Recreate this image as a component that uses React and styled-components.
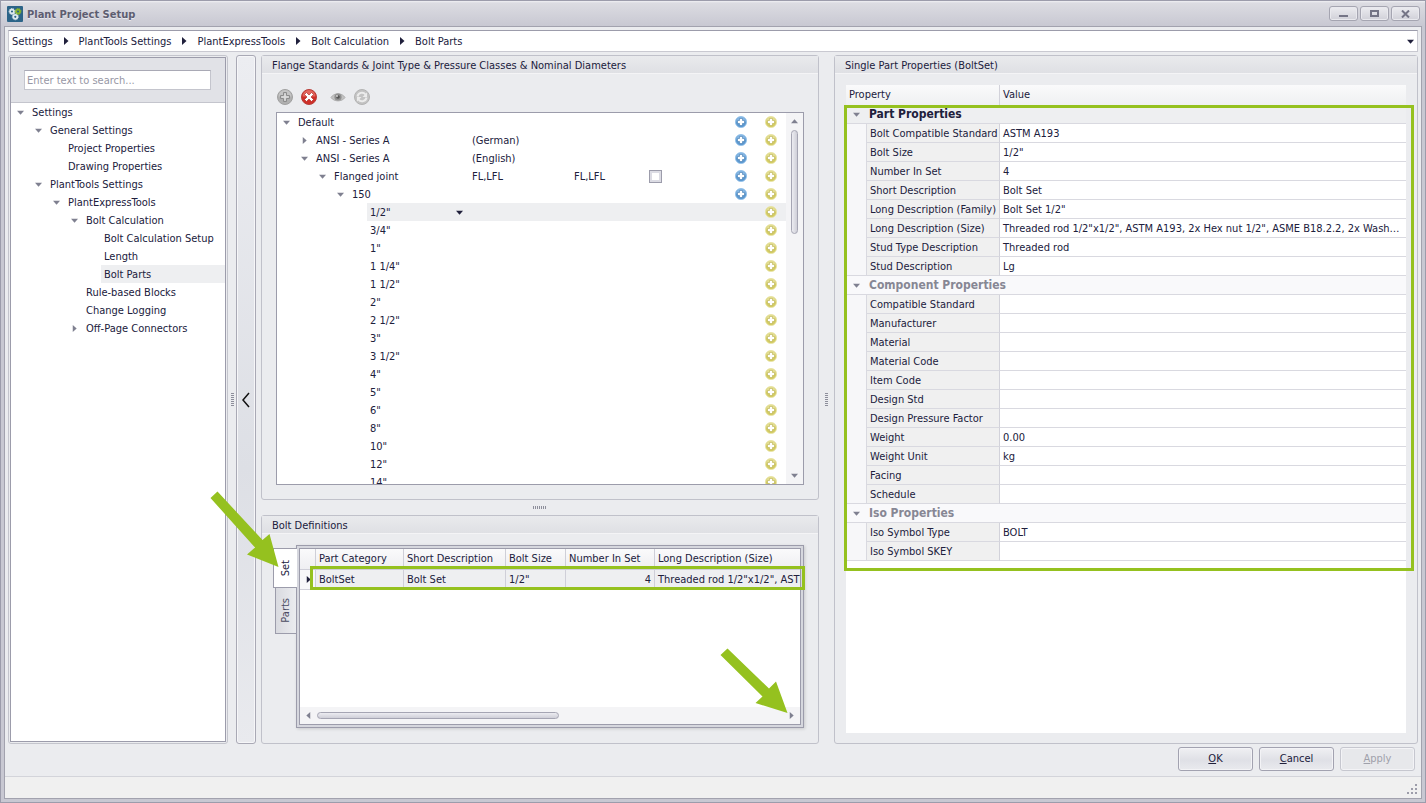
import React, { useState } from 'react';
import styled, { createGlobalStyle, css } from 'styled-components';

const GlobalStyle = createGlobalStyle`
  * {
    box-sizing: border-box;
  }

  body {
    margin: 0;
    color: #20203c;
    font-family: 'DejaVu Sans Condensed', 'DejaVu Sans', Tahoma, sans-serif;
    font-size: 11px;
    line-height: 18px;
  }

  button,
  input {
    font: inherit;
    color: inherit;
  }
`;

const GREEN = '#95c11f';

// Window frame
const Window = styled.div`
  display: flex;
  flex-direction: column;
  height: 100vh;
  min-height: 600px;
  padding: 0 3px 3px;
  border: 1px solid #9c9cab;
  background: #c8c8d2;
`;

const TitleBar = styled.header`
  display: flex;
  align-items: center;
  flex: none;
  height: 25px;
  margin: 0 -3px;
  padding: 0 5px 0 6px;
  background: linear-gradient(#f0f0f3 0, #dcdce2 2px, #c8c8d2 100%);
`;

const Title = styled.h1`
  flex: 1;
  height: 18px;
  margin: 0 0 0 4px;
  color: #5d5d70;
  font-size: 11px;
  font-weight: bold;
  line-height: 20px;
  text-shadow: 0 1px 0 #e8e8ee;
`;

const CaptionButtons = styled.div`
  display: flex;
  gap: 2px;
`;

const CaptionButton = styled.button`
  display: flex;
  align-items: center;
  justify-content: center;
  width: 29px;
  height: 15px;
  padding: 0;
  border: 1px solid #a5a5b1;
  border-radius: 3px;
  background: linear-gradient(#ececf0, #d0d0d8);
  box-shadow: inset 0 0 0 1px #e9e9ee;
`;

const Client = styled.div`
  display: flex;
  flex-direction: column;
  flex: 1;
  min-height: 0;
  border: 1px solid #a2a2ae;
  background: #ebecef;
`;

const Breadcrumb = styled.nav`
  display: flex;
  align-items: center;
  flex: none;
  gap: 9px;
  height: 22px;
  margin: 3px 3px 0;
  padding: 0 3px;
  border: 1px solid #c9c9d1;
  border-top-color: #9c9cab;
  background: #fff;

  a {
    height: 18px;
    color: inherit;
    line-height: 20px;
    text-decoration: none;
  }
`;

const CrumbMenu = styled.button`
  display: flex;
  margin-left: auto;
  padding: 0;
  border: 0;
  background: none;
`;

const Main = styled.main`
  display: grid;
  grid-template-columns: 220px 8px 20px 5px minmax(0, 558fr) 15px minmax(0, 584fr);
  flex: 1;
  min-height: 0;
  padding: 3px 3px 0;
`;

// Navigation
const NavFrame = styled.aside`
  padding: 1px;
  border: 1px solid #c4c5cd;
  border-radius: 3px;
  min-height: 0;
`;

const NavInner = styled.div`
  display: flex;
  flex-direction: column;
  height: 100%;
  border: 1px solid #9c9cab;
  background: #fff;
`;

const SearchBar = styled.div`
  padding: 12px 14px 12px 13px;
  border-bottom: 1px solid #c4c5cd;
  background: #e1e2e7;
`;

const SearchInput = styled.input`
  display: block;
  width: 100%;
  height: 20px;
  padding: 0 2px;
  border: 1px solid #c4c5cd;
  border-top-color: #a9a9b5;
  border-radius: 0;
  background: #fff;

  &::placeholder {
    color: #9797a5;
    opacity: 1;
  }
`;

const NavTree = styled.ul`
  margin: 0;
  padding: 0;
  list-style: none;
`;

const NavItem = styled.li`
  display: flex;
  align-items: center;
  height: 18px;
  padding-left: ${({ $level }) => $level * 18}px;
`;

const NavLink = styled.a`
  flex: 1;
  height: 18px;
  padding-left: 3px;
  color: inherit;
  line-height: 20px;
  text-decoration: none;
  background: ${({ $active }) => ($active ? '#eeeff1' : 'none')};
`;

const Expander = styled.button`
  display: flex;
  align-items: center;
  justify-content: center;
  flex: none;
  width: 18px;
  height: 18px;
  padding: 0;
  border: 0;
  background: none;
`;

const VSplitter = styled.div`
  display: flex;
  align-items: center;
  justify-content: center;
`;

const HSplitter = styled.div`
  display: flex;
  align-items: center;
  justify-content: center;
  flex: none;
  height: 15px;
`;

const CollapsedBar = styled.button`
  display: flex;
  align-items: center;
  justify-content: center;
  padding: 0;
  border: 1px solid #a9a9b5;
  border-radius: 3px;
  background: linear-gradient(#ecedf1, #dddfe5 60%, #e9eaee);
  box-shadow: inset 0 0 0 1px #f6f6f8;
`;

// Group boxes
const Column = styled.div`
  display: flex;
  flex-direction: column;
  min-height: 0;
`;

const Group = styled.section`
  display: flex;
  flex-direction: column;
  flex: ${({ $height }) => ($height ? `0 0 ${$height}` : '1')};
  min-height: 0;
  border: 1px solid #c0c1ca;
  border-radius: 3px;
  background: #ebecef;
`;

const GroupTitle = styled.h2`
  flex: none;
  height: 18px;
  margin: 0;
  padding: 0 10px;
  border-bottom: 1px solid #f4f4f6;
  background: linear-gradient(#e9eaed, #dfe0e4);
  font-size: 11px;
  font-weight: normal;
  line-height: 20px;
`;

const GroupBody = styled.div`
  display: flex;
  flex-direction: column;
  flex: 1;
  min-height: 0;
  padding: ${({ $pad }) => $pad};
`;

const Toolbar = styled.div`
  display: flex;
  flex: none;
  gap: 8px;
  height: 16px;
  margin-bottom: 7px;
  padding-left: 1px;

  button:nth-child(3) {
    margin-left: 5px;
  }
`;

const IconButton = styled.button`
  display: flex;
  width: 16px;
  height: 16px;
  padding: 0;
  border: 0;
  background: none;
`;

const TreeBox = styled.div`
  display: flex;
  flex: 1;
  min-height: 0;
  border: 1px solid #9c9cab;
  background: #fff;
`;

const TreeRows = styled.div`
  flex: 1;
  min-width: 0;
  overflow: hidden;
`;

const TreeRow = styled.div`
  display: grid;
  grid-template-columns: minmax(0, 1fr) 102px 55px 60px 41px 30px 30px;
  align-items: center;
  height: 18px;
  ${({ $level, $active }) =>
    $active &&
    css`
      background: linear-gradient(#eeeff1, #eeeff1) right / calc(100% - ${$level * 18}px) no-repeat;
    `}
`;

const TreeName = styled.div`
  display: flex;
  align-items: center;
  padding-left: ${({ $level }) => $level * 18}px;

  span {
    flex: 1;
    height: 18px;
    padding-left: 3px;
    line-height: 20px;
  }
`;

const TreeText = styled.span`
  height: 18px;
  padding-left: 4px;
  line-height: 20px;
`;

const TreeCentre = styled.span`
  display: flex;
  justify-content: center;
`;

const Check = styled.input`
  appearance: none;
  width: 13px;
  height: 13px;
  margin: 0;
  border: 1px solid #9c9cab;
  background: #fff;
  box-shadow: inset 0 0 0 2px #dcdce4;
`;

const ScrollBar = styled.div`
  display: flex;
  flex: none;
  flex-direction: ${({ $horizontal }) => ($horizontal ? 'row' : 'column')};
  align-items: center;
  gap: 5px;
  width: ${({ $horizontal }) => ($horizontal ? 'auto' : '17px')};
  height: ${({ $horizontal }) => ($horizontal ? '17px' : 'auto')};
  padding: ${({ $horizontal }) => ($horizontal ? '0 5px' : '5px 0')};
  background: #f4f4f6;
`;

const Track = styled.div`
  display: flex;
  flex: 1;
  flex-direction: inherit;
`;

const Thumb = styled.div`
  border: 1px solid #a5a5b3;
  border-radius: 4px;
  width: ${({ $horizontal }) => ($horizontal ? '52%' : '7px')};
  height: ${({ $horizontal }) => ($horizontal ? '7px' : '31%')};
  background: linear-gradient(${({ $horizontal }) => ($horizontal ? '180deg' : '90deg')}, #ececf1, #cfcfd8);
`;

// Bolt definitions
const Tabbed = styled.div`
  position: relative;
  display: flex;
  flex: 1;
  min-height: 0;
`;

const TabStrip = styled.div`
  display: flex;
  flex: none;
  flex-direction: column;
  align-items: flex-end;
  width: 23px;
  padding-top: 3px;
`;

const Tab = styled.button`
  z-index: ${({ $active }) => ($active ? 1 : 0)};
  width: ${({ $active }) => ($active ? 24 : 21)}px;
  height: ${({ $active }) => ($active ? 40 : 46)}px;
  margin-right: ${({ $active }) => ($active ? -1 : 0)}px;
  padding: 0;
  border: 1px solid #9c9cab;
  border-right: 0;
  border-top-width: ${({ $active }) => ($active ? 1 : 0)}px;
  background: ${({ $active }) => ($active ? '#fff' : 'linear-gradient(90deg, #d9dae0, #ebecef)')};
  color: ${({ $active }) => ($active ? '#20203c' : '#4c4c63')};
  line-height: 20px;
  writing-mode: vertical-rl;

  span {
    display: inline-block;
    rotate: 180deg;
  }
`;

const TabPage = styled.div`
  flex: 1;
  min-width: 0;
  padding: 2px;
  border: 1px solid #9c9cab;
  background: #d6d7de;
  box-shadow: 1px 1px 3px rgba(0, 0, 0, 0.15);
`;

const GridFrame = styled.div`
  display: flex;
  flex-direction: column;
  height: 100%;
  border: 1px solid #9c9cab;
  background: #fff;
`;

const GridClip = styled.div`
  flex: 1;
  overflow: hidden;
`;

const BoltGrid = styled.table`
  width: 100%;
  border-collapse: separate;
  border-spacing: 0;
  table-layout: fixed;

  th,
  td {
    height: 20px;
    padding: 0 3px;
    overflow: hidden;
    border-right: 1px solid #cfcfd8;
    border-bottom: 1px solid #cfcfd8;
    font-weight: normal;
    text-align: left;
    white-space: nowrap;
  }

  th {
    height: 21px;
    background: linear-gradient(#fafafb, #efeff2);
  }

  td {
    background: #eeeff1;
  }

  td:first-child {
    padding: 0 0 0 5px;
    background: #f7f7f9;
  }

  th:last-child,
  td:last-child {
    border-right: 0;
  }
`;

const NumberCell = styled.td`
  && {
    text-align: right;
  }
`;

const Highlight = styled.div`
  position: absolute;
  border: 3px solid ${GREEN};
  pointer-events: none;
`;

const RowHighlight = styled(Highlight)`
  top: 21px;
  right: -1px;
  left: 37px;
  height: 24px;
`;

const TabArrow = styled.svg`
  position: absolute;
  z-index: 2;
  top: -54px;
  left: -63px;
  pointer-events: none;
`;

const ScrollArrow = styled.svg`
  position: absolute;
  right: 16px;
  bottom: 14px;
  pointer-events: none;
`;

// Property grid
const PropertyBox = styled.div`
  flex: 1;
  min-height: 0;
  background: #fff;
`;

const PropertyWrap = styled.div`
  position: relative;
`;

const PropertyHighlight = styled(Highlight)`
  top: 20px;
  right: -8px;
  bottom: -10px;
  left: -2px;
`;

const PropertyTable = styled.table`
  width: 100%;
  border-collapse: separate;
  border-spacing: 0;
  table-layout: fixed;

  th,
  td {
    height: 19px;
    padding: 2px 4px 0;
    overflow: hidden;
    border-bottom: 1px solid #d9d9e0;
    font-weight: normal;
    line-height: 16px;
    text-align: left;
    text-overflow: ellipsis;
    white-space: nowrap;
  }

  thead th {
    height: 20px;
    padding: 0 3px;
    border-bottom: 0;
    background: linear-gradient(#fafafb, #eff0f2);
  }

  thead th + th,
  td {
    border-left: 1px solid #d2d2da;
  }

  tbody td {
    padding: 2px 3px 0;
  }

  tbody th[scope='row'] {
    padding: 2px 0 0 3px;
    border-left: 1px solid #d9d9e0;
    background: #f0f0f0;
    text-overflow: clip;
  }
`;

const Gutter = styled.td`
  && {
    padding: 0;
    border-bottom-color: ${({ $last }) => ($last ? '#d9d9e0' : 'transparent')};
    border-left: 0;
    background: #f7f7f9;
  }
`;

const CategoryCell = styled.th`
  && {
    padding: 0 1px;
    background: ${({ $active }) => ($active ? '#eeeff1' : '#f9f9fb')};
  }

  div {
    display: flex;
    align-items: center;
    height: 18px;
    color: ${({ $active }) => ($active ? '#20203c' : '#878794')};
    font-size: 12px;
    font-weight: bold;
    line-height: 18px;
  }

  button {
    margin-right: 4px;
  }
`;

// Footer
const Actions = styled.div`
  display: flex;
  flex: none;
  gap: 6px;
  justify-content: flex-end;
  padding: 3px 6px 5px;
`;

const ActionButton = styled.button`
  width: 75px;
  height: 24px;
  padding: 0;
  border: 1px solid #a2a2b0;
  border-radius: 3px;
  background: linear-gradient(#f0f0f3, #dfe0e6 55%, #e9eaee);
  box-shadow: inset 0 0 0 1px #f3f3f6;

  &:disabled {
    border-color: #c6c7cf;
    background: #e7e8eb;
    color: #9fa0aa;
  }
`;

const StatusBar = styled.footer`
  display: flex;
  align-items: flex-end;
  justify-content: flex-end;
  flex: none;
  height: 22px;
  padding: 3px;
  border-top: 1px solid #d3d4da;
  background: #f0f0f0;
`;

// Drawings
const ROTATION = { down: 0, left: 90, up: 180, right: 270 };

const Triangle = ({ dir = 'down', color = '#7f8090', size = 7 }) => (
  <svg width={size} height={size} viewBox="0 0 8 8" aria-hidden="true">
    <path d="M0 2h8L4 6.500z" fill={color} transform={`rotate(${ROTATION[dir]} 4 4)`} />
  </svg>
);

const AppIcon = () => (
  <svg width="16" height="16" viewBox="0 0 16 16" aria-hidden="true">
    <rect width="16" height="16" rx="1" fill="#2c6488" />
    <g fill="none" strokeWidth="1.800">
      <circle cx="5" cy="5.500" r="2" stroke="#dfeaf0" />
      <circle cx="11" cy="5.500" r="2" stroke="#86b52c" />
      <circle cx="8.300" cy="10.800" r="2" stroke="#dfeaf0" />
    </g>
    <g fill="none" strokeWidth="1" strokeDasharray="1 1.100">
      <circle cx="5" cy="5.500" r="3" stroke="#dfeaf0" />
      <circle cx="11" cy="5.500" r="3" stroke="#86b52c" />
      <circle cx="8.300" cy="10.800" r="3" stroke="#dfeaf0" />
    </g>
  </svg>
);

const PLUS_COLORS = {
  blue: ['#5b98d0', '#93c1ea', '#3f78b0'],
  yellow: ['#d3cb62', '#e8e4a4', '#b9b04a'],
};

const PlusIcon = ({ tone }) => {
  const [fill, light, edge] = PLUS_COLORS[tone];
  return (
    <svg width="12" height="12" viewBox="0 0 12 12" aria-hidden="true">
      <circle cx="6" cy="6" r="5.600" fill={fill} stroke={light} strokeWidth="0.800" />
      <path d="M1.200 5.500a4.800 4.800 0 0 1 9.600 0z" fill={light} opacity="0.700" />
      <path d="M4.500 2.500h3v2h2v3h-2v2h-3v-2h-2v-3h2z" fill="#fff" stroke={edge} strokeWidth="0.600" />
    </svg>
  );
};

const AddIcon = () => (
  <svg width="16" height="16" viewBox="0 0 16 16" aria-hidden="true">
    <circle cx="8" cy="8" r="7.500" fill="#b0b0b0" stroke="#a0a0a0" />
    <path d="M1.500 7.500a6.500 6.500 0 0 1 13 0z" fill="#c4c4c4" />
    <path d="M6.500 3.500h3v3h3v3h-3v3h-3v-3h-3v-3h3z" fill="#c6c6c6" stroke="#8c8c8c" />
    <path d="M7.500 4.500h1v3h3v1h-3v3h-1v-3h-3v-1h3z" fill="#e4e4e4" />
  </svg>
);

const DeleteIcon = () => (
  <svg width="16" height="16" viewBox="0 0 16 16" aria-hidden="true">
    <circle cx="8" cy="8" r="7.500" fill="#cf2f28" stroke="#b8403b" />
    <path d="M1.500 7.500a6.500 6.500 0 0 1 13 0z" fill="#e4685f" />
    <path
      d="M5.500 3.500 8 6l2.500-2.500 2 2L10 8l2.500 2.500-2 2L8 10l-2.500 2.500-2-2L6 8 3.500 5.500z"
      fill="#fff"
      stroke="#a8231f"
      strokeWidth="0.600"
    />
    <path d="M6 6h4v4H6z" fill="#fff" />
  </svg>
);

const EyeIcon = () => (
  <svg width="16" height="16" viewBox="0 0 16 16" aria-hidden="true">
    <path d="M1 8.500C4 3.500 12 3.500 15 8.500 12 13 4 13 1 8.500z" fill="#c2c2c2" stroke="#b0b0b0" />
    <circle cx="8" cy="8" r="3.600" fill="#8f8f8f" />
    <circle cx="8" cy="8" r="1.800" fill="#555" />
    <circle cx="7" cy="7" r="0.900" fill="#ddd" />
  </svg>
);

const RefreshIcon = () => (
  <svg width="16" height="16" viewBox="0 0 16 16" aria-hidden="true">
    <circle cx="8" cy="8" r="7.500" fill="#c3c3c3" stroke="#b3b3b3" />
    <path d="M3.500 7.500a4.500 4.500 0 0 1 8-2M12.500 8.500a4.500 4.500 0 0 1-8 2" fill="none" stroke="#ececec" strokeWidth="2" />
    <path d="M13 3.500v4.500H8.500zM3 12.500V8h4.500z" fill="#ececec" />
  </svg>
);

const Grip = ({ vertical }) => (
  <svg width={vertical ? 3 : 14} height={vertical ? 14 : 3} aria-hidden="true">
    {[0, 2, 4, 6, 8, 10, 12].map((at) => (
      <rect
        key={at}
        x={vertical ? 0 : at}
        y={vertical ? at : 0}
        width={vertical ? 3 : 1}
        height={vertical ? 1 : 3}
        fill="#8d8e9b"
      />
    ))}
  </svg>
);

const ResizeGrip = () => (
  <svg width="11" height="11" aria-hidden="true" fill="#9d9daa">
    <path d="M8 0h2v2h-2zM4 4h2v2h-2zM8 4h2v2h-2zM0 8h2v2h-2zM4 8h2v2h-2zM8 8h2v2h-2z" />
  </svg>
);

// Data
const crumbs = ['Settings', 'PlantTools Settings', 'PlantExpressTools', 'Bolt Calculation', 'Bolt Parts'];

const navItems = [
  { label: 'Settings', level: 0, state: 'open' },
  { label: 'General Settings', level: 1, state: 'open' },
  { label: 'Project Properties', level: 2 },
  { label: 'Drawing Properties', level: 2 },
  { label: 'PlantTools Settings', level: 1, state: 'open' },
  { label: 'PlantExpressTools', level: 2, state: 'open' },
  { label: 'Bolt Calculation', level: 3, state: 'open' },
  { label: 'Bolt Calculation Setup', level: 4 },
  { label: 'Length', level: 4 },
  { label: 'Bolt Parts', level: 4 },
  { label: 'Rule-based Blocks', level: 3 },
  { label: 'Change Logging', level: 3 },
  { label: 'Off-Page Connectors', level: 3, state: 'closed' },
];

const sizes = ['1/2"', '3/4"', '1"', '1 1/4"', '1 1/2"', '2"', '2 1/2"', '3"', '3 1/2"', '4"', '5"', '6"', '8"', '10"', '12"', '14"'];

const treeRows = [
  { name: 'Default', level: 0, state: 'open' },
  { name: 'ANSI - Series A', level: 1, state: 'closed', first: '(German)' },
  { name: 'ANSI - Series A', level: 1, state: 'open', first: '(English)' },
  { name: 'Flanged joint', level: 2, state: 'open', first: 'FL,LFL', second: 'FL,LFL', check: true },
  { name: '150', level: 3, state: 'open' },
  ...sizes.map((name) => ({ name, level: 4, leaf: true })),
];

const categories = [
  {
    name: 'Part Properties',
    rows: [
      ['Bolt Compatible Standard', 'ASTM A193'],
      ['Bolt Size', '1/2"'],
      ['Number In Set', '4'],
      ['Short Description', 'Bolt Set'],
      ['Long Description (Family)', 'Bolt Set 1/2"'],
      ['Long Description (Size)', 'Threaded rod 1/2"x1/2", ASTM A193, 2x Hex nut 1/2", ASME B18.2.2, 2x Washer 1/2"'],
      ['Stud Type Description', 'Threaded rod'],
      ['Stud Description', 'Lg'],
    ],
  },
  {
    name: 'Component Properties',
    rows: [
      ['Compatible Standard', ''],
      ['Manufacturer', ''],
      ['Material', ''],
      ['Material Code', ''],
      ['Item Code', ''],
      ['Design Std', ''],
      ['Design Pressure Factor', ''],
      ['Weight', '0.00'],
      ['Weight Unit', 'kg'],
      ['Facing', ''],
      ['Schedule', ''],
    ],
  },
  {
    name: 'Iso Properties',
    rows: [
      ['Iso Symbol Type', 'BOLT'],
      ['Iso Symbol SKEY', ''],
    ],
  },
];

const TreeExpander = ({ state, label }) => (
  <Expander aria-label={label}>{state && <Triangle dir={state === 'open' ? 'down' : 'right'} />}</Expander>
);

const Navigation = () => {
  const [active, setActive] = useState('Bolt Parts');

  return (
    <NavFrame>
      <NavInner>
        <SearchBar>
          <SearchInput type="text" aria-label="Search" placeholder="Enter text to search..." />
        </SearchBar>
        <NavTree>
          {navItems.map(({ label, level, state }) => (
            <NavItem key={label} $level={level}>
              <TreeExpander state={state} label={label} />
              <NavLink href="#" $active={active === label} onClick={() => setActive(label)}>
                {label}
              </NavLink>
            </NavItem>
          ))}
        </NavTree>
      </NavInner>
    </NavFrame>
  );
};

const FlangeStandards = () => {
  const [selected, setSelected] = useState('1/2"');

  return (
    <Group>
      <GroupTitle>Flange Standards &amp; Joint Type &amp; Pressure Classes &amp; Nominal Diameters</GroupTitle>
      <GroupBody $pad="15px 14px 14px">
        <Toolbar>
          <IconButton aria-label="Add"><AddIcon /></IconButton>
          <IconButton aria-label="Delete"><DeleteIcon /></IconButton>
          <IconButton aria-label="Show"><EyeIcon /></IconButton>
          <IconButton aria-label="Refresh"><RefreshIcon /></IconButton>
        </Toolbar>
        <TreeBox>
          <TreeRows>
            {treeRows.map((row, index) => (
              <TreeRow
                key={index}
                $level={row.level + 1}
                $active={row.name === selected}
                onClick={() => setSelected(row.name)}
              >
                <TreeName $level={row.level}>
                  <TreeExpander state={row.state} label={row.name} />
                  <span>{row.name}</span>
                  {row.name === selected && (
                    <Expander aria-label="Choose size"><Triangle color="#20203c" /></Expander>
                  )}
                </TreeName>
                <TreeText>{row.first}</TreeText>
                <TreeText>{row.second}</TreeText>
                <TreeCentre>{row.check && <Check type="checkbox" aria-label={row.name} />}</TreeCentre>
                <span />
                <TreeCentre>{!row.leaf && <PlusIcon tone="blue" />}</TreeCentre>
                <TreeCentre><PlusIcon tone="yellow" /></TreeCentre>
              </TreeRow>
            ))}
          </TreeRows>
          <ScrollBar>
            <Triangle dir="up" />
            <Track><Thumb /></Track>
            <Triangle />
          </ScrollBar>
        </TreeBox>
      </GroupBody>
    </Group>
  );
};

const BoltDefinitions = () => {
  const [tab, setTab] = useState('Set');

  return (
    <Group $height="229px">
      <GroupTitle>Bolt Definitions</GroupTitle>
      <GroupBody $pad="11px 14px 15px 11px">
        <Tabbed>
          <TabStrip role="tablist">
            {['Set', 'Parts'].map((name) => (
              <Tab
                key={name}
                role="tab"
                aria-selected={tab === name}
                $active={tab === name}
                onClick={() => setTab(name)}
              >
                <span>{name}</span>
              </Tab>
            ))}
          </TabStrip>
          <TabPage>
            <GridFrame>
              <GridClip>
                <BoltGrid>
                  <colgroup>
                    <col width="16" />
                    <col width="88" />
                    <col width="102" />
                    <col width="60" />
                    <col width="89" />
                    <col />
                  </colgroup>
                  <thead>
                    <tr>
                      <th aria-label="Current row" />
                      <th>Part Category</th>
                      <th>Short Description</th>
                      <th>Bolt Size</th>
                      <th>Number In Set</th>
                      <th>Long Description (Size)</th>
                    </tr>
                  </thead>
                  <tbody>
                    <tr>
                      <td><Triangle dir="right" color="#20203c" /></td>
                      <td>BoltSet</td>
                      <td>Bolt Set</td>
                      <td>1/2"</td>
                      <NumberCell>4</NumberCell>
                      <td>Threaded rod 1/2"x1/2", ASTM A193</td>
                    </tr>
                  </tbody>
                </BoltGrid>
              </GridClip>
              <ScrollBar $horizontal>
                <Triangle dir="left" />
                <Track><Thumb $horizontal /></Track>
                <Triangle dir="right" />
              </ScrollBar>
            </GridFrame>
          </TabPage>
          <RowHighlight />
          <TabArrow width="70" height="78" viewBox="0 0 70 78" aria-hidden="true">
            <path d="M7.500 0.500 52.500 49 59.500 43 68.500 76 37 63.500 45 56.500 0.500 7z" fill={GREEN} />
          </TabArrow>
          <ScrollArrow width="68" height="66" viewBox="0 0 68 66" aria-hidden="true">
            <path d="M7.500 0.500 49 40.500 56 33.500 67.500 65 35.500 55 42.500 48.500 0.500 7z" fill={GREEN} />
          </ScrollArrow>
        </Tabbed>
      </GroupBody>
    </Group>
  );
};

const PartProperties = () => (
  <Group>
    <GroupTitle>Single Part Properties (BoltSet)</GroupTitle>
    <GroupBody $pad="11px 11px 10px">
      <PropertyBox>
        <PropertyWrap>
          <PropertyTable>
            <colgroup>
              <col width="20" />
              <col width="133" />
              <col />
            </colgroup>
            <thead>
              <tr>
                <th colSpan="2">Property</th>
                <th>Value</th>
              </tr>
            </thead>
            {categories.map(({ name, rows }, group) => (
              <tbody key={name}>
                <tr>
                  <CategoryCell colSpan="3" $active={group === 0}>
                    <div>
                      <TreeExpander state="open" label={name} />
                      {name}
                    </div>
                  </CategoryCell>
                </tr>
                {rows.map(([label, value], index) => (
                  <tr key={label}>
                    <Gutter $last={index === rows.length - 1} />
                    <th scope="row">{label}</th>
                    <td>{value}</td>
                  </tr>
                ))}
              </tbody>
            ))}
          </PropertyTable>
          <PropertyHighlight />
        </PropertyWrap>
      </PropertyBox>
    </GroupBody>
  </Group>
);

const App = () => (
  <Window>
    <GlobalStyle />
    <TitleBar>
      <AppIcon />
      <Title>Plant Project Setup</Title>
      <CaptionButtons>
        <CaptionButton aria-label="Minimize">
          <svg width="10" height="8"><path d="M0 5h9v2H0z" fill="#757586" /></svg>
        </CaptionButton>
        <CaptionButton aria-label="Maximize">
          <svg width="9" height="7"><path d="M1 1h7v5H1z" fill="none" stroke="#757586" strokeWidth="2" /></svg>
        </CaptionButton>
        <CaptionButton aria-label="Close">
          <svg width="9" height="8"><path d="M1 0.500 8 7.500M8 0.500 1 7.500" stroke="#757586" strokeWidth="2" /></svg>
        </CaptionButton>
      </CaptionButtons>
    </TitleBar>
    <Client>
      <Breadcrumb aria-label="Path">
        {crumbs.map((crumb, index) => (
          <React.Fragment key={crumb}>
            {index > 0 && <Triangle dir="right" color="#20203c" size={8} />}
            <a href="#">{crumb}</a>
          </React.Fragment>
        ))}
        <CrumbMenu aria-label="Path history"><Triangle color="#20203c" /></CrumbMenu>
      </Breadcrumb>
      <Main>
        <Navigation />
        <VSplitter><Grip vertical /></VSplitter>
        <CollapsedBar aria-label="Expand">
          <svg width="8" height="16"><path d="M7 1 1 8l6 7" fill="none" stroke="#111" strokeWidth="1.500" /></svg>
        </CollapsedBar>
        <span />
        <Column>
          <FlangeStandards />
          <HSplitter><Grip /></HSplitter>
          <BoltDefinitions />
        </Column>
        <VSplitter><Grip vertical /></VSplitter>
        <PartProperties />
      </Main>
      <Actions>
        <ActionButton><u>O</u>K</ActionButton>
        <ActionButton><u>C</u>ancel</ActionButton>
        <ActionButton disabled><u>A</u>pply</ActionButton>
      </Actions>
      <StatusBar><ResizeGrip /></StatusBar>
    </Client>
  </Window>
);

export default App;
